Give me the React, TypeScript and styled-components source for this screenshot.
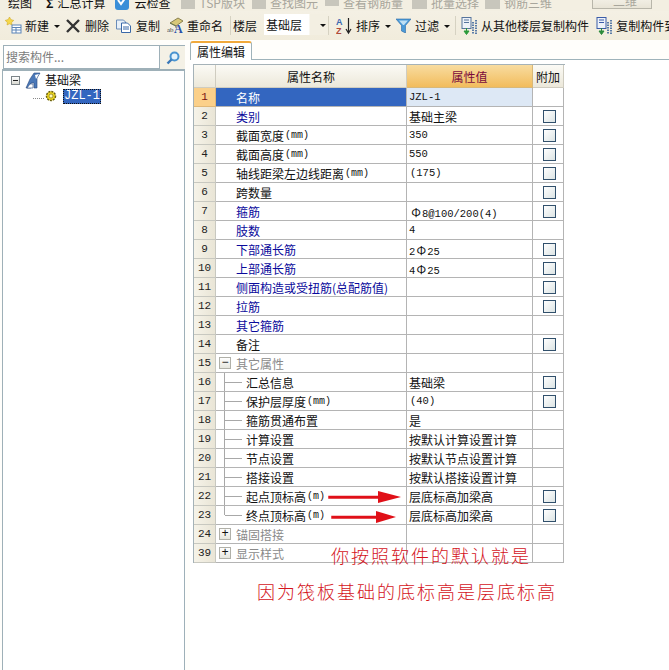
import React from 'react';
import styled, { createGlobalStyle } from 'styled-components';

const CJK = '"Noto Sans CJK SC", "Liberation Sans", sans-serif';
const LATIN = '"Liberation Mono", "Noto Sans CJK SC", monospace';

const GlobalStyle = createGlobalStyle`
  html, body { margin: 0; padding: 0; background: #fff; }
  body { font-family: ${CJK}; font-size: 12px; color: #111; }
`;

const Page = styled.div`
  position: relative;
  width: 669px;
  height: 670px;
  overflow: hidden;
  display: flex;
  flex-direction: column;
  background: #fff;
`;

const MenuStrip = styled.div`
  height: 11px;
  flex: none;
  display: flex;
  align-items: flex-end;
  overflow: hidden;
  background: #f3efe2;
  line-height: 14px;
`;

const MenuItem = styled.span<{ $left: number; $faded?: boolean }>`
  flex: none;
  display: flex;
  align-items: center;
  gap: 4px;
  margin-left: ${(p) => p.$left}px;
  margin-bottom: 1px;
  white-space: nowrap;
  color: ${(p) => (p.$faded ? '#a8a69c' : '#111')};
`;

const ViewBox = styled.span`
  flex: none;
  width: 60px;
  height: 16px;
  margin-left: 40px;
  margin-bottom: 2px;
  padding-left: 20px;
  box-sizing: border-box;
  line-height: 14px;
  color: #a8a69c;
  border: 1px solid #b8b6aa;
  background: linear-gradient(#f8f6ee, #e8e4d6);
`;

const Toolbar = styled.div`
  height: 29px;
  flex: none;
  display: flex;
  align-items: center;
  padding-left: 5px;
  white-space: nowrap;
  background: linear-gradient(#f4f0e4, #f1ecdc);
`;

const ToolText = styled.span<{ $left?: number }>`
  flex: none;
  margin-left: ${(p) => p.$left ?? 3}px;
  line-height: 16px;
`;

const ToolIcon = styled.svg<{ $left?: number }>`
  flex: none;
  margin-left: ${(p) => p.$left ?? 0}px;
`;

const Caret = styled.i<{ $left?: number }>`
  flex: none;
  margin-left: ${(p) => p.$left ?? 5}px;
  margin-top: 2px;
  border-left: 3px solid transparent;
  border-right: 3px solid transparent;
  border-top: 3px solid #111;
`;

const Separator = styled.i<{ $left: number }>`
  flex: none;
  width: 1px;
  height: 19px;
  margin-left: ${(p) => p.$left}px;
  background: #d6d2c2;
`;

const FloorSelect = styled.div`
  flex: none;
  width: 64px;
  height: 21px;
  margin-left: 7px;
  padding: 0 2px;
  margin-bottom: 2px;
  box-sizing: border-box;
  display: flex;
  align-items: center;
  justify-content: space-between;
  background: linear-gradient(90deg, #fff 0, #fff 70%, #f3efe2 72%);
`;

const Body = styled.div`
  flex: 1;
  min-height: 0;
  display: flex;
  background: #fffefb;
`;

const LeftPanel = styled.aside`
  flex: none;
  width: 185px;
  display: flex;
  flex-direction: column;
  padding-top: 5px;
  box-sizing: border-box;
`;

const SearchRow = styled.div`
  flex: none;
  height: 24px;
  margin-left: 3px;
  display: flex;
  background: #fff;
  border-top: 1px solid #9eb0b8;
  border-left: 1px solid #9eb0b8;
  box-sizing: border-box;
`;

const SearchInput = styled.div`
  width: 156px;
  color: #7c7c7c;
  line-height: 21px;
  padding-left: 2px;
  box-sizing: border-box;
  border-right: 1px solid #9eb0b8;
  border-bottom: 1px solid #9eb0b8;
`;

const SearchButton = styled.div`
  flex: 1;
  display: flex;
  align-items: center;
  justify-content: center;
  background: #f4f1e6;
`;

const Tree = styled.div`
  flex: 1;
  margin-left: 2px;
  border-top: 2px solid #9eb0b8;
  border-left: 1px solid #9eb0b8;
  border-right: 1px solid #9eb0b8;
  background: #fff;
  padding-top: 1px;
`;

const TreeRow = styled.div<{ $indent: number }>`
  height: 16px;
  display: flex;
  align-items: center;
  padding-left: ${(p) => p.$indent}px;
`;

const MiniToggle = styled.span`
  width: 7px;
  height: 7px;
  border: 1px solid #7c8488;
  background: linear-gradient(#fff, #d9d9d2);
  display: flex;
  align-items: center;
  justify-content: center;
  margin-right: 5px;
  &::before {
    content: '';
    width: 5px;
    height: 1px;
    background: #222;
  }
`;

const DotLine = styled.span`
  width: 11px;
  margin-top: 4px;
  border-top: 1px dotted #888;
  margin-right: 1px;
`;

const SelectedNode = styled.span`
  margin-left: 6px;
  padding: 0 1px;
  line-height: 15px;
  height: 15px;
  background: #3366c0;
  color: #fff;
  outline: 1px dotted #111;
  outline-offset: -1px;
  font-family: ${LATIN};
  font-size: 12px;
`;

const Workspace = styled.main`
  flex: 1;
  min-width: 0;
  padding: 1px 0 0 5px;
  display: flex;
  flex-direction: column;
`;

const TabStrip = styled.div`
  flex: none;
  height: 19px;
  box-sizing: border-box;
  display: flex;
  align-items: flex-end;
  border-bottom: 1px solid #9fb3ba;
`;

const Tab = styled.div`
  width: 62px;
  height: 19px;
  box-sizing: border-box;
  text-align: center;
  line-height: 17px;
  margin-bottom: -1px;
  background: #fff;
  border: 1px solid #9fb3ba;
  border-bottom: none;
  border-top: 2px solid #f0a93c;
  border-radius: 3px 3px 0 0;
`;

const Sheet = styled.div`
  flex: 1;
  background: #fff;
  padding: 4px 0 0 3px;
`;

const Grid = styled.div`
  display: grid;
  grid-template-columns: 22px 191px 126px 31px;
  grid-template-rows: 23px;
  grid-auto-rows: 19px;
  width: 371px;
  border-left: 1px solid #a5b2b8;
  border-top: 1px solid #a5b2b8;
`;

const Cell = styled.div`
  position: relative;
  display: flex;
  align-items: center;
  box-sizing: border-box;
  border-right: 1px solid #b4b4b4;
  border-bottom: 1px solid #b4b4b4;
  white-space: nowrap;
`;

const HeadCell = styled(Cell)<{ $value?: boolean }>`
  justify-content: center;
  color: ${(p) => (p.$value ? '#7a0a3c' : '#111')};
  background: ${(p) =>
    p.$value ? 'linear-gradient(#f8dca0, #f2bc5c)' : 'linear-gradient(#fbfaf5, #ece8da)'};
  border-color: ${(p) => (p.$value ? '#d8b878' : '#cfccc0')};
`;

const NumCell = styled(Cell)<{ $active?: boolean }>`
  justify-content: center;
  font-family: ${LATIN};
  font-size: 11px;
  color: ${(p) => (p.$active ? '#7a1010' : '#222')};
  background: ${(p) => (p.$active ? '#fbd08a' : 'linear-gradient(90deg, #f6f3e9, #e9e5d6)')};
  border-color: ${(p) => (p.$active ? '#e0b878' : '#c8c8c0')};
`;

type Tone = 'plain' | 'blue' | 'group' | 'selected';

const NameCell = styled(Cell)<{ $tone: Tone; $pad: number }>`
  padding-left: ${(p) => p.$pad}px;
  background: ${(p) => (p.$tone === 'selected' ? '#3366c0' : '#fff')};
  color: ${(p) =>
    p.$tone === 'selected'
      ? '#fff'
      : p.$tone === 'blue'
        ? '#0a0a9c'
        : p.$tone === 'group'
          ? '#8a8a8a'
          : '#111'};
`;

const Unit = styled.span`
  font-family: ${LATIN};
  font-size: 10px;
  margin-left: 1px;
`;

const Branch = styled.i<{ $last: boolean }>`
  position: absolute;
  left: 8px;
  top: 0;
  width: 17px;
  height: ${(p) => (p.$last ? '9px' : '18px')};
  border-left: 1px solid #a8a8a8;
  &::after {
    content: '';
    position: absolute;
    left: 0;
    top: 9px;
    width: 17px;
    border-top: 1px solid #a8a8a8;
  }
`;

const GroupToggle = styled.span`
  position: absolute;
  left: 3px;
  top: 3px;
  width: 10px;
  height: 10px;
  box-sizing: content-box;
  border: 1px solid #b0b0a8;
  background: linear-gradient(#fff, #e6e6de);
  color: #111;
  font: 12px/10px ${LATIN};
  text-align: center;
`;

const ValueCell = styled(Cell)<{ $active?: boolean }>`
  padding-left: 2px;
  background: ${(p) => (p.$active ? '#dde8f5' : '#fff')};
`;

const Mono = styled.span<{ $indent?: number }>`
  font-family: ${LATIN};
  font-size: 10.5px;
  margin-left: ${(p) => p.$indent ?? 0}px;
`;

const Rebar = styled.span`
  display: inline-block;
  width: 12px;
  text-align: center;
  font-size: 12px;
  font-family: ${CJK};
`;

const AttachCell = styled(Cell)`
  justify-content: center;
  padding-left: 3px;
`;

const CheckBox = styled.span`
  width: 11px;
  height: 11px;
  border: 1px solid #31506c;
  background: linear-gradient(135deg, #fff, #dce4e4);
`;

const ArrowMark = styled.svg<{ $x: number; $y: number }>`
  position: absolute;
  left: ${(p) => p.$x}px;
  top: ${(p) => p.$y}px;
`;

const Annotation = styled.div<{ $x: number; $y: number }>`
  position: absolute;
  left: ${(p) => p.$x}px;
  top: ${(p) => p.$y}px;
  color: #d4141c;
  font-size: 18px;
  line-height: 24px;
  letter-spacing: 2px;
  white-space: nowrap;
  font-weight: 300;
`;

type Row = {
  no: number;
  name: React.ReactNode;
  value?: React.ReactNode;
  tone?: Tone;
  check?: boolean;
  child?: boolean;
  toggle?: '+' | '−';
  last?: boolean;
};

const mm = <Unit>(mm)</Unit>;
const m = <Unit>(m)</Unit>;

const rows: Row[] = [
  { no: 1, name: '名称', value: <Mono>JZL-1</Mono>, tone: 'selected' },
  { no: 2, name: '类别', value: '基础主梁', tone: 'blue', check: true },
  { no: 3, name: <>截面宽度{mm}</>, value: <Mono>350</Mono>, check: true },
  { no: 4, name: <>截面高度{mm}</>, value: <Mono>550</Mono>, check: true },
  { no: 5, name: <>轴线距梁左边线距离{mm}</>, value: <Mono $indent={1}>(175)</Mono>, check: true },
  { no: 6, name: '跨数量', check: true },
  { no: 7, name: '箍筋', value: <Mono $indent={1}><Rebar>Φ</Rebar>8@100/200(4)</Mono>, tone: 'blue', check: true },
  { no: 8, name: '肢数', value: <Mono>4</Mono>, tone: 'blue' },
  { no: 9, name: '下部通长筋', value: <Mono>2<Rebar>Φ</Rebar>25</Mono>, tone: 'blue', check: true },
  { no: 10, name: '上部通长筋', value: <Mono>4<Rebar>Φ</Rebar>25</Mono>, tone: 'blue', check: true },
  { no: 11, name: '侧面构造或受扭筋(总配筋值)', tone: 'blue', check: true },
  { no: 12, name: '拉筋', tone: 'blue', check: true },
  { no: 13, name: '其它箍筋', tone: 'blue' },
  { no: 14, name: '备注', check: true },
  { no: 15, name: '其它属性', tone: 'group', toggle: '−' },
  { no: 16, name: '汇总信息', value: '基础梁', child: true, check: true },
  { no: 17, name: <>保护层厚度{mm}</>, value: <Mono $indent={1}>(40)</Mono>, child: true, check: true },
  { no: 18, name: '箍筋贯通布置', value: '是', child: true },
  { no: 19, name: '计算设置', value: '按默认计算设置计算', child: true },
  { no: 20, name: '节点设置', value: '按默认节点设置计算', child: true },
  { no: 21, name: '搭接设置', value: '按默认搭接设置计算', child: true },
  { no: 22, name: <>起点顶标高{m}</>, value: '层底标高加梁高', child: true, check: true },
  { no: 23, name: <>终点顶标高{m}</>, value: '层底标高加梁高', child: true, check: true, last: true },
  { no: 24, name: '锚固搭接', tone: 'group', toggle: '+' },
  { no: 39, name: '显示样式', tone: 'group', toggle: '+' },
];

const menuItems = [
  { left: 8, label: '绘图' },
  { left: 14, label: '汇总计算', icon: <strong>Σ</strong> },
  {
    left: 9,
    label: '云检查',
    icon: (
      <svg width="16" height="14" viewBox="0 0 16 14">
        <rect x="1" y="0" width="14" height="14" rx="3" fill="#3a8fd8" />
        <path d="M4 4l3 4 5-7" stroke="#fff" strokeWidth="2" fill="none" />
      </svg>
    ),
  },
  { left: 11, label: 'TSP版块', faded: true, icon: <svg width="14" height="12"><rect width="14" height="12" fill="#c8c6bc" /></svg> },
  { left: 7, label: '查找图元', faded: true, icon: <svg width="14" height="12"><rect width="14" height="12" fill="#c8c6bc" /></svg> },
  { left: 7, label: '查看钢筋量', faded: true, icon: <svg width="14" height="12"><rect width="14" height="6" y="3" fill="#c8c6bc" /></svg> },
  { left: 9, label: '批量选择', faded: true, icon: <svg width="15" height="12"><rect width="15" height="12" fill="#c8c6bc" /></svg> },
  { left: 6, label: '钢筋三维', faded: true, icon: <svg width="15" height="12"><rect width="15" height="12" fill="#c8c6bc" /></svg> },
];

const App: React.FC = () => (
  <>
    <GlobalStyle />
    <Page>
      <MenuStrip>
        {menuItems.map((item) => (
          <MenuItem key={item.label} $left={item.left} $faded={item.faded}>
            {item.icon}
            {item.label}
          </MenuItem>
        ))}
        <ViewBox>二维</ViewBox>
      </MenuStrip>

      <Toolbar>
        <ToolIcon width="17" height="17" viewBox="0 0 17 17">
          <path d="M4.5 0l1.4 2.6L8.800 3.400 6.600 5.500 7 8 4.500 6.800 2 8l.4-2.500L.2 3.400l2.900-.8z" fill="#f6d84a" stroke="#c8a020" strokeWidth=".5" />
          <rect x="7" y="8" width="9" height="8" fill="#fff" stroke="#5a84b8" />
          <path d="M7 10.500h9M7 13h9M11 10v6" stroke="#5a84b8" />
        </ToolIcon>
        <ToolText>新建</ToolText>
        <Caret />
        <ToolIcon $left={6} width="14" height="14" viewBox="0 0 14 14">
          <path d="M1 1l12 12M13 1L1 13" stroke="#333" strokeWidth="2.400" />
        </ToolIcon>
        <ToolText $left={5}>删除</ToolText>
        <ToolIcon $left={7} width="15" height="14" viewBox="0 0 15 14">
          <path d="M.5 1h7l2 2v7h-9z" fill="#e8f0f8" stroke="#6a8cb8" />
          <path d="M5.500 4h6l3 3v6.500h-9z" fill="#fff" stroke="#3a68a8" />
          <path d="M7 8h6M7 10h6" stroke="#3a68a8" />
        </ToolIcon>
        <ToolText $left={5}>复制</ToolText>
        <ToolIcon $left={7} width="17" height="17" viewBox="0 0 17 17">
          <path d="M3 6l8-5 5 3-7 5z" fill="#d8c878" stroke="#8a8050" />
          <path d="M3 6l6 3v2" fill="none" stroke="#6a7a50" />
          <text x="0" y="15" fontSize="7" fontFamily="Liberation Serif" fill="#444">ab</text>
          <text x="7" y="16" fontSize="12" fontWeight="bold" fontFamily="Liberation Serif" fill="#2a50a8">A</text>
        </ToolIcon>
        <ToolText $left={3}>重命名</ToolText>
        <Separator $left={7} />
        <ToolText $left={2}>楼层</ToolText>
        <FloorSelect>
          基础层
          <Caret $left={0} />
        </FloorSelect>
        <Separator $left={0} />
        <ToolIcon $left={7} width="18" height="18" viewBox="0 0 18 18">
          <text x="0" y="8" fontSize="9" fontWeight="bold" fontFamily="Liberation Sans" fill="#3a68b0">A</text>
          <text x="0" y="17" fontSize="9" fontWeight="bold" fontFamily="Liberation Sans" fill="#b04a3a">Z</text>
          <path d="M12.500 1v14M10 12l2.500 4 2.500-4" stroke="#222" strokeWidth="1.200" fill="none" />
        </ToolIcon>
        <ToolText $left={2}>排序</ToolText>
        <Caret />
        <ToolIcon $left={5} width="15" height="15" viewBox="0 0 15 15">
          <path d="M0 1h15L9.500 7.500V15l-4-2V7.500z" fill="#4a9ad8" stroke="#2a6aa8" strokeWidth=".6" />
          <path d="M3 2.500h9L8 7H7z" fill="#bfe0f4" />
        </ToolIcon>
        <ToolText $left={4}>过滤</ToolText>
        <Caret />
        <Separator $left={5} />
        <ToolIcon $left={5} width="17" height="18" viewBox="0 0 17 18">
          <rect x="1" y="0.500" width="9" height="11" fill="#eef2f8" stroke="#56749c" />
          <path d="M3 3h5M3 5.500h5" stroke="#56749c" />
          <path d="M5.500 11v3M3 14h5l-2.500 3.500z" fill="#2a9a3a" stroke="#2a9a3a" />
          <path d="M12 5v12M15 3v14" stroke="#5a7ca8" strokeWidth="2" strokeDasharray="1.500 1" />
        </ToolIcon>
        <ToolText $left={3}>从其他楼层复制构件</ToolText>
        <ToolIcon $left={7} width="17" height="18" viewBox="0 0 17 18">
          <rect x="1" y="0.500" width="9" height="11" fill="#eef2f8" stroke="#3a5ca8" />
          <path d="M3 3h5M3 5.500h5" stroke="#3a5ca8" />
          <path d="M5.500 11v3M3 14h5l-2.500 3.500z" fill="#2a8a3a" stroke="#2a8a3a" />
          <path d="M12 5v12M15 3v14" stroke="#5a7ca8" strokeWidth="2" strokeDasharray="1.500 1" />
        </ToolIcon>
        <ToolText $left={3}>复制构件到其它楼层</ToolText>
      </Toolbar>

      <Body>
        <LeftPanel>
          <SearchRow>
            <SearchInput>搜索构件...</SearchInput>
            <SearchButton>
              <svg width="14" height="14" viewBox="0 0 14 14">
                <circle cx="8.500" cy="5.500" r="4" fill="#e4f2fb" stroke="#4a94d0" strokeWidth="2" />
                <path d="M5.500 8.500L1.500 12.500" stroke="#3a78b8" strokeWidth="2.400" />
              </svg>
            </SearchButton>
          </SearchRow>
          <Tree>
            <TreeRow $indent={8}>
              <MiniToggle />
              <svg width="16" height="17" viewBox="0 0 16 17">
                <path d="M1 16l4-9 4-6h6l-3 5v10H9V11H6v5z" fill="#4a78b8" stroke="#2a4a80" strokeWidth=".6" />
                <path d="M10 3l4-1-3 5z" fill="#fff" />
                <path d="M2 16h6V12H5z" fill="#fff" stroke="#2a4a80" strokeWidth=".6" />
              </svg>
              <ToolText $left={4}>基础梁</ToolText>
            </TreeRow>
            <TreeRow $indent={30}>
              <DotLine />
              <svg width="12" height="12" viewBox="0 0 12 12">
                <circle cx="6" cy="6" r="4.500" fill="#f0d820" stroke="#6a6010" strokeWidth="1.500" strokeDasharray="2 1" />
                <circle cx="6" cy="6" r="2" fill="#fff8b0" stroke="#6a6010" strokeWidth=".6" />
              </svg>
              <SelectedNode>JZL-1</SelectedNode>
            </TreeRow>
          </Tree>
        </LeftPanel>

        <Workspace>
          <TabStrip>
            <Tab>属性编辑</Tab>
          </TabStrip>
          <Sheet>
            <Grid>
              <HeadCell />
              <HeadCell>属性名称</HeadCell>
              <HeadCell $value>属性值</HeadCell>
              <HeadCell>附加</HeadCell>
              {rows.map((r) => (
                <React.Fragment key={r.no}>
                  <NumCell $active={r.no === 1}>{r.no}</NumCell>
                  <NameCell $tone={r.tone ?? 'plain'} $pad={r.child ? 30 : 20}>
                    {r.child && <Branch $last={!!r.last} />}
                    {r.toggle && <GroupToggle>{r.toggle}</GroupToggle>}
                    {r.name}
                  </NameCell>
                  <ValueCell $active={r.no === 1}>{r.value}</ValueCell>
                  <AttachCell>{r.check && <CheckBox />}</AttachCell>
                </React.Fragment>
              ))}
            </Grid>
          </Sheet>
        </Workspace>
      </Body>

      <ArrowMark $x={328} $y={490} width="74" height="14" viewBox="0 0 74 14">
        <path d="M1 6.500h50v1.500H1z" fill="#e01018" stroke="#e01018" strokeWidth="1.500" />
        <path d="M50 1l23 6-23 6z" fill="#e01018" />
      </ArrowMark>
      <ArrowMark $x={331} $y={510} width="66" height="14" viewBox="0 0 66 14">
        <path d="M1 6.500h44v1.500H1z" fill="#e01018" stroke="#e01018" strokeWidth="1.500" />
        <path d="M45 1l20 6-20 6z" fill="#e01018" />
      </ArrowMark>
      <Annotation $x={331} $y={543}>你按照软件的默认就是</Annotation>
      <Annotation $x={257} $y={579}>因为筏板基础的底标高是层底标高</Annotation>
    </Page>
  </>
);

export default App;
